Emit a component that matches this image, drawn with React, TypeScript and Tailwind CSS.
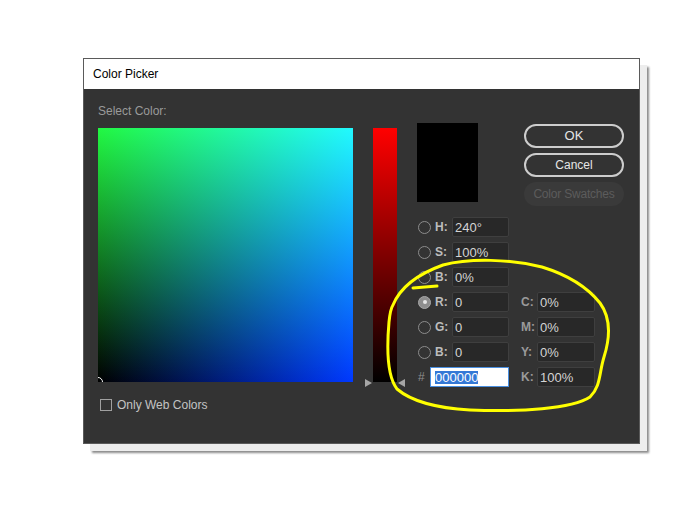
import React from "react";

function Radio({ checked }: { checked?: boolean }) {
  return checked ? (
    <div className="w-[13px] h-[13px] rounded-full border border-[#a8a8a8] bg-[#8e8e8e] flex items-center justify-center">
      <div className="w-[4px] h-[4px] rounded-full bg-[#e6e6e6]" />
    </div>
  ) : (
    <div className="w-[13px] h-[13px] rounded-full border-[1.5px] border-[#8c8c8c]" />
  );
}

function Field({ value, w }: { value: string; w: string }) {
  return (
    <div
      className={`${w} h-[20px] bg-[#282828] border border-[#3f3f3f] rounded-[2px] flex items-center pl-[2px] text-[13px] text-[#d4d4d4] leading-none`}
    >
      {value}
    </div>
  );
}

type Row = {
  radio?: boolean;
  checked?: boolean;
  label: string;
  value: string;
  right?: { label: string; value: string };
  hex?: boolean;
};

const rows: Row[] = [
  { radio: true, label: "H:", value: "240°" },
  { radio: true, label: "S:", value: "100%" },
  { radio: true, label: "B:", value: "0%" },
  { radio: true, checked: true, label: "R:", value: "0", right: { label: "C:", value: "0%" } },
  { radio: true, label: "G:", value: "0", right: { label: "M:", value: "0%" } },
  { radio: true, label: "B:", value: "0", right: { label: "Y:", value: "0%" } },
  { hex: true, label: "#", value: "000000", right: { label: "K:", value: "100%" } },
];

export default function App() {
  return (
    <div className="relative w-[685px] h-[509px] bg-white overflow-hidden font-['Liberation_Sans',Arial,sans-serif]">
      <div className="pt-[58px] pl-[83px]">
        <div className="w-[557px] h-[386px] border border-[#5a5a5a] bg-[#333333] flex flex-col shadow-[7px_7px_0_0_#ededed,9px_9px_2px_0_#8c8c8c]">
          <div className="h-[30px] bg-white flex items-center pl-[9px] text-[12px] text-black">
            Color Picker
          </div>
          <div className="flex flex-1 pl-[14px] pr-[15px]">
            {/* column 1 */}
            <div className="w-[255px] pt-[14px] flex flex-col">
              <div className="text-[12px] leading-[16px] text-[#9a9a9a]">Select Color:</div>
              <div className="relative mt-[9px] w-[255px] h-[254px] overflow-hidden bg-[linear-gradient(to_bottom,#22f842,#000000),linear-gradient(to_right,#000000,#0038ff)] bg-blend-screen">
                <div className="absolute left-[-5px] bottom-[-5px] w-[10px] h-[10px] rounded-full border border-white" />
              </div>
              <div className="mt-[17px] ml-[2px] flex items-center gap-[5px]">
                <div className="w-[12px] h-[12px] border border-[#a0a0a0]" />
                <span className="text-[12px] leading-none text-[#c4c4c4]">Only Web Colors</span>
              </div>
            </div>
            {/* column 2: slider */}
            <div className="ml-[20px] mt-[39px] relative w-[24px] h-[254px] bg-[linear-gradient(to_bottom,#ff0000,#000000)]">
              <div className="absolute left-[-8px] top-[251px] w-0 h-0 border-y-[4px] border-y-transparent border-l-[7px] border-l-[#a6a6a6]" />
              <div className="absolute left-[25px] top-[251px] w-0 h-0 border-y-[4px] border-y-transparent border-r-[7px] border-r-[#a6a6a6]" />
            </div>
            {/* column 3 */}
            <div className="ml-[20px] flex-1 pt-[34px] flex flex-col">
              <div className="flex">
                <div className="w-[61px] h-[79px] bg-black" />
                <div className="ml-auto w-[100px] pt-[1px] flex flex-col">
                  <div className="h-[24px] rounded-full border-2 border-[#cdcdcd] flex items-center justify-center text-[13px] text-[#e6e6e6]">
                    OK
                  </div>
                  <div className="mt-[5px] h-[24px] rounded-full border-2 border-[#cdcdcd] flex items-center justify-center text-[12px] text-[#e6e6e6]">
                    Cancel
                  </div>
                  <div className="mt-[5px] h-[24px] rounded-full bg-[#3a3a3a] flex items-center justify-center text-[12px] text-[#5c5c5c] tracking-[-0.2px]">
                    Color Swatches
                  </div>
                </div>
              </div>
              <div className="mt-[11px] flex flex-col gap-[5px]">
                {rows.map((r, i) => (
                  <div key={i} className="flex items-center h-[20px]">
                    {r.hex ? (
                      <div className="flex items-center w-[92px]">
                        <span className="w-[13px] pl-[1px] text-[12px] text-[#8e8e8e]">#</span>
                        <div className="w-[79px] h-[20px] bg-white border border-[#4a8fe0] flex items-center pl-[4px] overflow-hidden">
                          <span className="bg-[#3478d6] text-white text-[13px] leading-[13px]">000000</span>
                        </div>
                      </div>
                    ) : (
                      <div className="flex items-center w-[92px]">
                        <div className="ml-[1px]">
                          <Radio checked={r.checked} />
                        </div>
                        <span className="ml-[4px] w-[17px] text-[12px] font-bold text-[#bdbdbd]">{r.label}</span>
                        <Field value={r.value} w="w-[57px]" />
                      </div>
                    )}
                    {r.right && (
                      <div className="ml-[12px] flex items-center">
                        <span className="w-[16px] text-[12px] font-bold text-[#9a9a9a]">{r.right.label}</span>
                        <Field value={r.right.value} w="w-[58px]" />
                      </div>
                    )}
                  </div>
                ))}
              </div>
            </div>
          </div>
        </div>
      </div>
      <svg
        className="absolute inset-0 pointer-events-none"
        width="685"
        height="509"
        viewBox="0 0 685 509"
      >
        <path
          d="M 393 305 C 400 288, 418 274, 443 265 C 470 258, 510 259, 542 267 C 568 275, 588 288, 600 303 C 611 318, 610 338, 604 357 C 599 373, 601 386, 590 397 C 572 409, 520 412, 470 410 C 435 408, 411 401, 397 389 C 386 375, 387 345, 389 322 C 390 312, 391 308, 393 305"
          fill="none"
          stroke="#ffff00"
          strokeWidth="3"
          strokeLinecap="round"
        />
        <path d="M 413 288 L 437 286" fill="none" stroke="#ffff00" strokeWidth="3" strokeLinecap="round" />
      </svg>
    </div>
  );
}
